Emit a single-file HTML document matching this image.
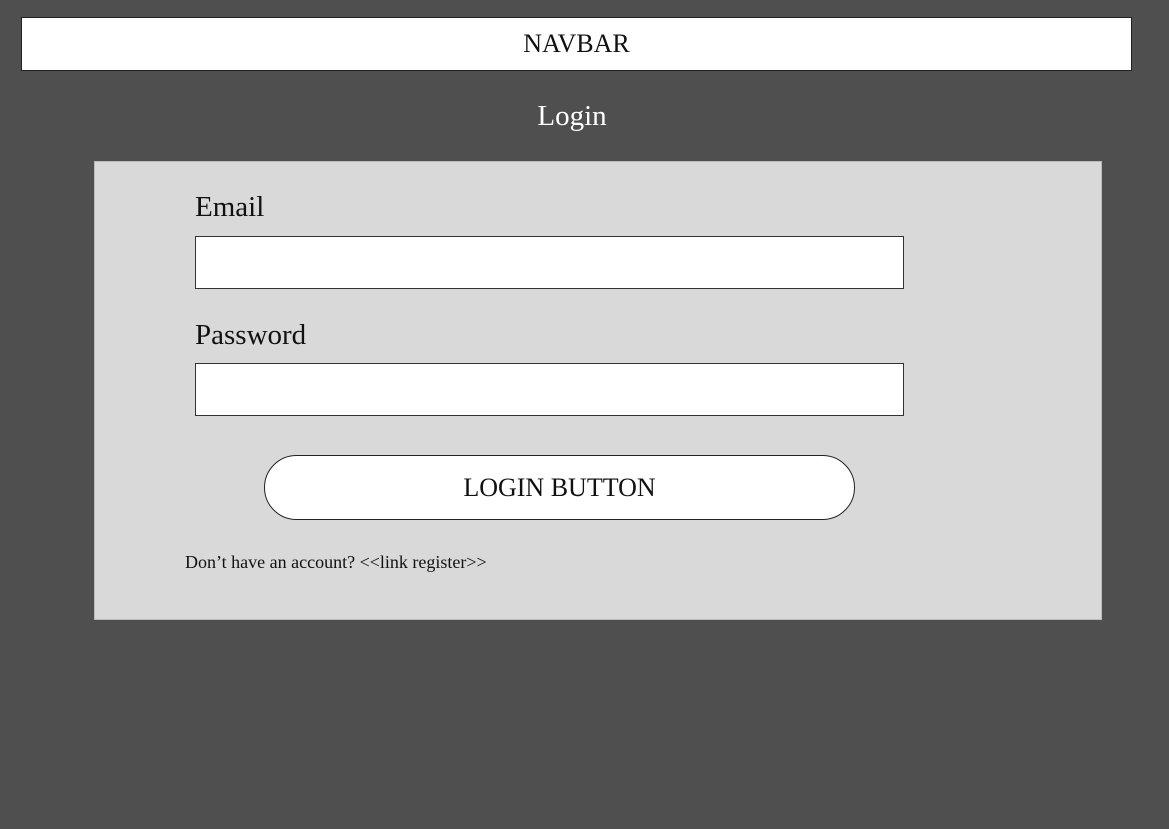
<!DOCTYPE html>
<html><head><meta charset="utf-8"><style>
*{margin:0;padding:0;box-sizing:border-box}
body{width:1169px;height:829px;background:#4f4f4f;position:relative;font-family:"Liberation Serif","DejaVu Serif",serif;overflow:hidden}
.abs{position:absolute}
.nav{left:21px;top:17px;width:1111px;height:54px;background:#fff;border:1px solid #222;text-align:center;line-height:52px;font-size:26px;color:#111}
.title{left:0;width:1144px;top:98px;text-align:center;color:#fff;font-size:29px;line-height:36px}
.panel{left:94px;top:161px;width:1008px;height:459px;background:#d9d9d9;border:1px solid #bbb}
.lbl{font-size:29px;color:#111;line-height:34px}
.inp{left:195px;width:709px;height:53px;background:#fff;border:1px solid #333}
.btn{left:264px;top:455px;width:591px;height:65px;background:#fff;border:1px solid #222;border-radius:33px;text-align:center;line-height:63px;font-size:26px;color:#111}
.small{left:185px;top:551px;font-size:18px;color:#111;line-height:22px}
</style></head><body>
<div class="abs nav">NAVBAR</div>
<div class="abs title">Login</div>
<div class="abs panel"></div>
<div class="abs lbl" style="left:195px;top:190px">Email</div>
<div class="abs inp" style="top:236px"></div>
<div class="abs lbl" style="left:195px;top:318px">Password</div>
<div class="abs inp" style="top:363px"></div>
<div class="abs btn">LOGIN BUTTON</div>
<div class="abs small">Don’t have an account? &lt;&lt;link register&gt;&gt;</div>
</body></html>
